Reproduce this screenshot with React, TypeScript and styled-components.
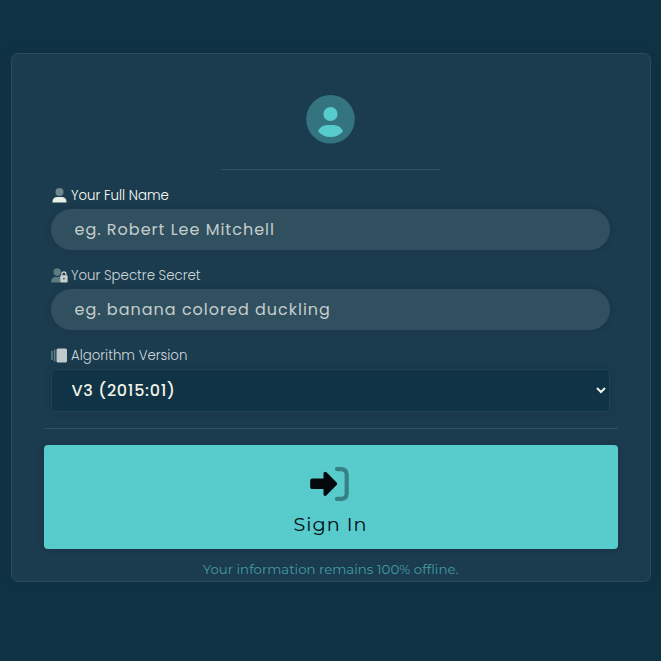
import React from "react";
import styled, { createGlobalStyle } from "styled-components";

const GlobalStyle = createGlobalStyle`
  * { box-sizing: border-box; }
  body {
    margin: 0;
    background: #0f3345;
    font-family: Poppins, Inter, "Open Sans", sans-serif;
  }
`;

const Page = styled.main`
  height: 661px;
  padding: 53px 10.5px 0;
  overflow: hidden;
`;

const Card = styled.form`
  display: flex;
  flex-direction: column;
  height: 529px;
  padding: 41px 32px 0;
  border: 1px solid #2c4c5d;
  border-radius: 7px;
  background: #1b3b4e;
  box-shadow: 0 0 12px rgba(0, 20, 35, 0.12);
`;

const Avatar = styled.svg`
  display: block;
  width: 49px;
  height: 49px;
  margin: 0 auto;
`;

const Divider = styled.hr<{ $width: string; $gap: string }>`
  flex: none;
  width: ${(p) => p.$width};
  height: 1px;
  margin: ${(p) => p.$gap};
  border: 0;
  background: #315061;
`;

const Field = styled.div`
  height: 80px;
  margin: 0 8px 0 7px;
`;

const Label = styled.label<{ $active?: boolean }>`
  display: flex;
  align-items: center;
  height: 27px;
  color: ${(p) => (p.$active ? "#fbfff8" : "#ced8da")};
  font-size: 13.333px;
  font-weight: 300;
  white-space: nowrap;
`;

const LabelIcon = styled.svg`
  flex: none;
  width: 18px;
  height: 16px;
  margin-right: 2.500px;
`;

const Input = styled.input`
  display: block;
  width: 100%;
  height: 41px;
  padding: 0 24px;
  border: 0;
  border-radius: 21px;
  outline: none;
  background: #30505f;
  box-shadow: 0 0 8px rgba(0, 25, 40, 0.12);
  color: #eef3e8;
  font: 400 16px Poppins, Inter, sans-serif;
  letter-spacing: 1px;
  &::placeholder { color: #c4cdcd; opacity: 1; }
`;

const Select = styled.select`
  display: block;
  width: 100%;
  height: 43px;
  padding: 0 0 0 16px;
  border: 1px solid #1f4253;
  border-radius: 4px;
  outline: none;
  background: #103346;
  box-shadow: 0 0 8px rgba(0, 25, 40, 0.12);
  color: #f1f4e8;
  font: 500 16px Poppins, Inter, sans-serif;
  letter-spacing: 0.7px;
`;

const SignIn = styled.button`
  display: flex;
  flex: none;
  flex-direction: column;
  align-items: center;
  height: 104px;
  padding: 21px 0 0;
  border: 0;
  border-radius: 4px;
  background: #58cccd;
  box-shadow: 0 0 8px rgba(0, 25, 40, 0.12);
  color: #020a0e;
  font: 400 19.2px/24px Montserrat, Inter, sans-serif;
  letter-spacing: 1px;
`;

const SignInIcon = styled.svg`
  width: 40px;
  height: 36px;
  margin: 0 2px 10px 0;
`;

const Note = styled.p`
  margin: 10px 0 0;
  color: #449ca5;
  font: 400 13.333px/20px Montserrat, Inter, sans-serif;
  text-align: center;
  white-space: nowrap;
`;

export default function App() {
  return (
    <>
      <GlobalStyle />
      <Page>
        <Card onSubmit={(e) => e.preventDefault()}>
          <Avatar viewBox="0 0 49 49">
            <circle cx="24.5" cy="24.3" r="24.3" fill="#34747f" />
            <circle cx="24.5" cy="19" r="7.1" fill="#58cccd" />
            <path
              d="M12 36.2C14 32.2 17.400 30 21.500 30h6c4.100 0 7.500 2.200 9.600 6.200C34 40 29.500 42 24.500 42S15 40 12 36.200Z"
              fill="#58cccd"
            />
          </Avatar>
          <Divider $width="219px" $gap="25px auto 12px" />

          <Field>
            <Label htmlFor="name" $active>
              <LabelIcon viewBox="0 0 18 16">
                <circle cx="8.500" cy="4.100" r="4" fill="#6f8790" />
                <path d="M1.500 14.500v-1C1.500 11 3.500 9.100 6 9.100h5c2.500 0 4.500 1.900 4.500 4.400v1Z" fill="#e7eee4" />
              </LabelIcon>
              Your Full Name
            </Label>
            <Input id="name" placeholder="eg. Robert Lee Mitchell" />
          </Field>

          <Field>
            <Label htmlFor="secret">
              <LabelIcon viewBox="0 0 18 16">
                <circle cx="6.200" cy="4.100" r="3.800" fill="#5d7c80" />
                <path d="M0 14.500C0 11 2 9.100 4.600 9.100h4.700v5.400Z" fill="#5d7c80" />
                <path d="M10.900 7.500V6a2 2 0 0 1 4 0v1.500" fill="none" stroke="#c8d0d1" strokeWidth="1.300" />
                <rect x="9.200" y="7.200" width="7.400" height="7.300" rx="1" fill="#c8d0d1" />
                <circle cx="12.900" cy="10.800" r="1" fill="#526b75" />
              </LabelIcon>
              Your Spectre Secret
            </Label>
            <Input id="secret" placeholder="eg. banana colored duckling" />
          </Field>

          <Field>
            <Label htmlFor="version">
              <LabelIcon viewBox="0 0 18 16">
                <path d="M1 3v9M3.600 1.500v12" stroke="#5f8583" strokeWidth="1.500" />
                <rect x="5.500" y=".5" width="10.500" height="14" rx="1.500" fill="#c0cacd" />
              </LabelIcon>
              Algorithm Version
            </Label>
            <Select id="version" defaultValue="3">
              <option value="3">V3 (2015:01)</option>
            </Select>
          </Field>

          <Divider $width="100%" $gap="6px 0 16px" />
          <SignIn type="submit">
            <SignInIcon viewBox="0 0 40 36">
              <path
                d="M2.500 12.500h11V7.600c0-1.900 1.600-2.600 3-1.300l10.100 10.200c.8.800.8 1.800 0 2.600L16.500 29.300c-1.400 1.300-3 .6-3-1.300v-4.900h-11C1.100 23.100.2 22.200.2 20.800v-6c0-1.400.9-2.300 2.300-2.300Z"
                fill="#03090c"
              />
              <path
                d="M27 3.100h4c3.600 0 5.700 2.100 5.700 5.700v18.400c0 3.600-2.100 5.700-5.700 5.700h-4"
                fill="none"
                stroke="#378086"
                strokeWidth="4.200"
                strokeLinecap="round"
              />
            </SignInIcon>
            Sign In
          </SignIn>
          <Note>Your information remains 100% offline.</Note>
        </Card>
      </Page>
    </>
  );
}
